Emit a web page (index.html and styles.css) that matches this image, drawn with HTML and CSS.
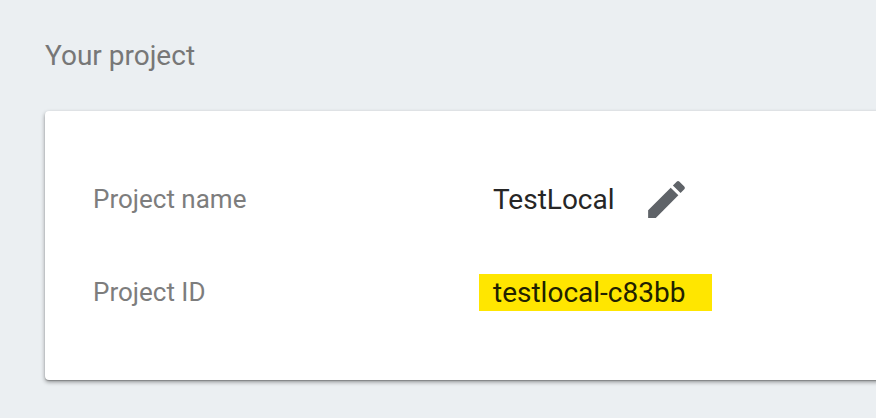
FILE: index.html
```
<!DOCTYPE html>
<html lang="en">
<head>
<meta charset="utf-8">
<title>Your project</title>
<link rel="stylesheet" href="styles.css">
</head>
<body>
<main class="page">
  <h1 class="title">Your project</h1>
  <section class="card">
    <dl class="details">
      <dt class="label">Project name</dt>
      <dd class="value">TestLocal
        <svg class="edit" viewBox="0 0 24 24" aria-hidden="true"><path d="M3 17.25V21h3.75L17.81 9.94l-3.75-3.75L3 17.25zM20.71 7.04a1 1 0 0 0 0-1.41l-2.34-2.34a1 1 0 0 0-1.41 0l-1.83 1.83 3.75 3.75 1.83-1.83z"/></svg>
      </dd>
      <dt class="label">Project ID</dt>
      <dd class="value"><span class="highlight">testlocal-c83bb</span></dd>
    </dl>
  </section>
</main>
</body>
</html>
```
FILE: styles.css
```
* { box-sizing: border-box; }
body {
  margin: 0;
  background: #ebeff2;
  font-family: Roboto, sans-serif;
}
.page { height: 418px; padding: 36px 0 0 45px; overflow: hidden; }
.title {
  margin: 0 0 35px;
  font-size: 28px;
  font-weight: 400;
  line-height: 40px;
  color: #777;
}
.card {
  height: 269px;
  margin-right: -6px;
  padding: 42px 0 42px 48px;
  background: #fff;
  border-radius: 4px;
  box-shadow: 0 2px 4px rgba(0, 0, 0, .4), 0 1px 1px rgba(0, 0, 0, .2);
}
.details {
  display: grid;
  grid-template-columns: 400px 1fr;
  grid-auto-rows: 93px;
  margin: 0;
}
.label { font-size: 26px; line-height: 93px; color: #7d7d7d; }
.value {
  display: flex;
  align-items: center;
  height: 93px;
  margin: 0;
  font-size: 28px;
  color: #262626;
}
.edit { width: 49px; height: 49px; margin-left: 27px; fill: #5f6368; }
.highlight {
  width: 233px;
  margin-left: -14px;
  padding-left: 14px;
  line-height: 37px;
  color: #212100;
  background: #ffe600;
}
```
